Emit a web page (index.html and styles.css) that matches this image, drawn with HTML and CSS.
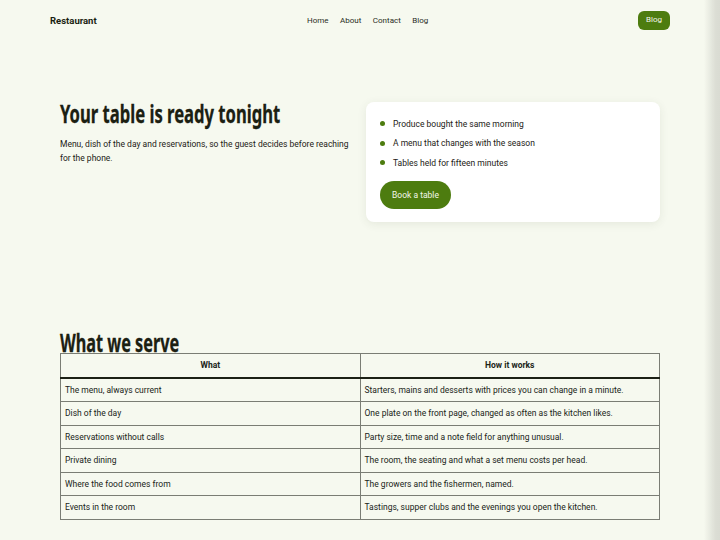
FILE: index.html
```html
<!DOCTYPE html>
<html lang="en">
<head>
<meta charset="utf-8">
<title>Restaurant</title>
<link rel="stylesheet" href="styles.css">
</head>
<body>
<header class="topbar">
  <a class="brand" href="#">Restaurant</a>
  <nav class="links">
    <a href="#">Home</a>
    <a href="#">About</a>
    <a href="#">Contact</a>
    <a href="#">Blog</a>
  </nav>
  <a class="pill" href="#">Blog</a>
</header>

<main class="page">
  <section class="hero">
    <div class="hero-text">
      <h1>Your table is ready tonight</h1>
      <p>Menu, dish of the day and reservations, so the guest decides before reaching for the phone.</p>
    </div>
    <div class="card">
      <ul class="points">
        <li>Produce bought the same morning</li>
        <li>A menu that changes with the season</li>
        <li>Tables held for fifteen minutes</li>
      </ul>
      <a class="cta" href="#">Book a table</a>
    </div>
  </section>

  <section class="serve">
    <h2>What we serve</h2>
    <table class="grid">
      <thead>
        <tr><th>What</th><th>How it works</th></tr>
      </thead>
      <tbody>
        <tr><td>The menu, always current</td><td>Starters, mains and desserts with prices you can change in a minute.</td></tr>
        <tr><td>Dish of the day</td><td>One plate on the front page, changed as often as the kitchen likes.</td></tr>
        <tr><td>Reservations without calls</td><td>Party size, time and a note field for anything unusual.</td></tr>
        <tr><td>Private dining</td><td>The room, the seating and what a set menu costs per head.</td></tr>
        <tr><td>Where the food comes from</td><td>The growers and the fishermen, named.</td></tr>
        <tr><td>Events in the room</td><td>Tastings, supper clubs and the evenings you open the kitchen.</td></tr>
      </tbody>
    </table>
  </section>
</main>
<div class="edge"></div>
</body>
</html>
```

FILE: styles.css
```css
* { box-sizing: border-box; }

html, body {
  margin: 0;
  height: 540px;
  overflow: hidden;
}

body {
  background: #f6f9ef;
  color: #1c2115;
  font-family: Roboto, "Noto Sans", sans-serif;
  font-size: 8.5px;
}

a { text-decoration: none; color: inherit; }

.topbar {
  width: 620px;
  margin: 0 auto;
  height: 40px;
  display: flex;
  align-items: center;
  justify-content: space-between;
}

.brand {
  font-weight: 700;
  font-size: 9.5px;
  color: #1a1f12;
  width: 120px;
}

.links {
  display: flex;
  gap: 11.5px;
  margin-left: 137px;
  font-size: 8px;
  color: #2a2e24;
}

.pill {
  background: #4d7c0f;
  color: #f3f7ea;
  border-radius: 6px;
  padding: 4.5px 8px;
  line-height: 10px;
  font-size: 8px;
  margin-left: auto;
}

.page {
  width: 600px;
  margin: 0 auto;
}

.hero {
  display: flex;
  justify-content: space-between;
  align-items: flex-start;
  padding-top: 62px;
  height: 291px;
}

.hero-text { width: 292px; }

/* condensed display headings */
h1, h2 {
  font-family: "Noto Sans", "DejaVu Sans", sans-serif;
  font-weight: 700;
  color: #1b2012;
  margin: 0;
  white-space: nowrap;
  transform: scaleX(0.65);
  transform-origin: left center;
  -webkit-text-stroke: 0.3px #1b2012;
}

h1 {
  font-size: 25px;
  line-height: 26px;
  margin-top: -2px;
  transform: scaleX(0.665);
}

.hero-text p {
  margin: 11px 0 0;
  line-height: 14px;
}

.card {
  width: 294px;
  background: #fff;
  border-radius: 8px;
  box-shadow: 0 2px 10px rgba(60, 70, 40, 0.09);
  padding: 15.5px 14px 13.5px;
}

.points {
  list-style: none;
  margin: 0;
  padding: 0;
  display: flex;
  flex-direction: column;
  gap: 7.5px;
}

.points li {
  display: flex;
  align-items: center;
  gap: 8px;
  line-height: 12px;
}

.points li::before {
  content: "";
  width: 5px;
  height: 5px;
  border-radius: 50%;
  background: #4d7c0f;
  flex: none;
}

.cta {
  display: inline-block;
  margin-top: 12px;
  background: #4d7c0f;
  color: #f3f7ea;
  border-radius: 14px;
  height: 28px;
  line-height: 28px;
  padding: 0 12px;
}

.serve h2 {
  font-size: 25px;
  line-height: 22px;
}

.grid {
  width: 100%;
  border-collapse: collapse;
  table-layout: fixed;
  color: #202418;
}

.grid th, .grid td {
  border: 1px solid #7a7d74;
  padding: 5px 4px;
  line-height: 12.5px;
  text-align: left;
  font-weight: 400;
}

.grid th {
  text-align: center;
  font-weight: 700;
  border-bottom: 2px solid #1c2115;
  padding: 5px 4px;
}

.edge {
  position: fixed;
  top: 0;
  right: 0;
  width: 16px;
  height: 100%;
  background: linear-gradient(to right, rgba(220, 222, 212, 0), #dcded5 70%, #d9dbd2);
  pointer-events: none;
}
```
